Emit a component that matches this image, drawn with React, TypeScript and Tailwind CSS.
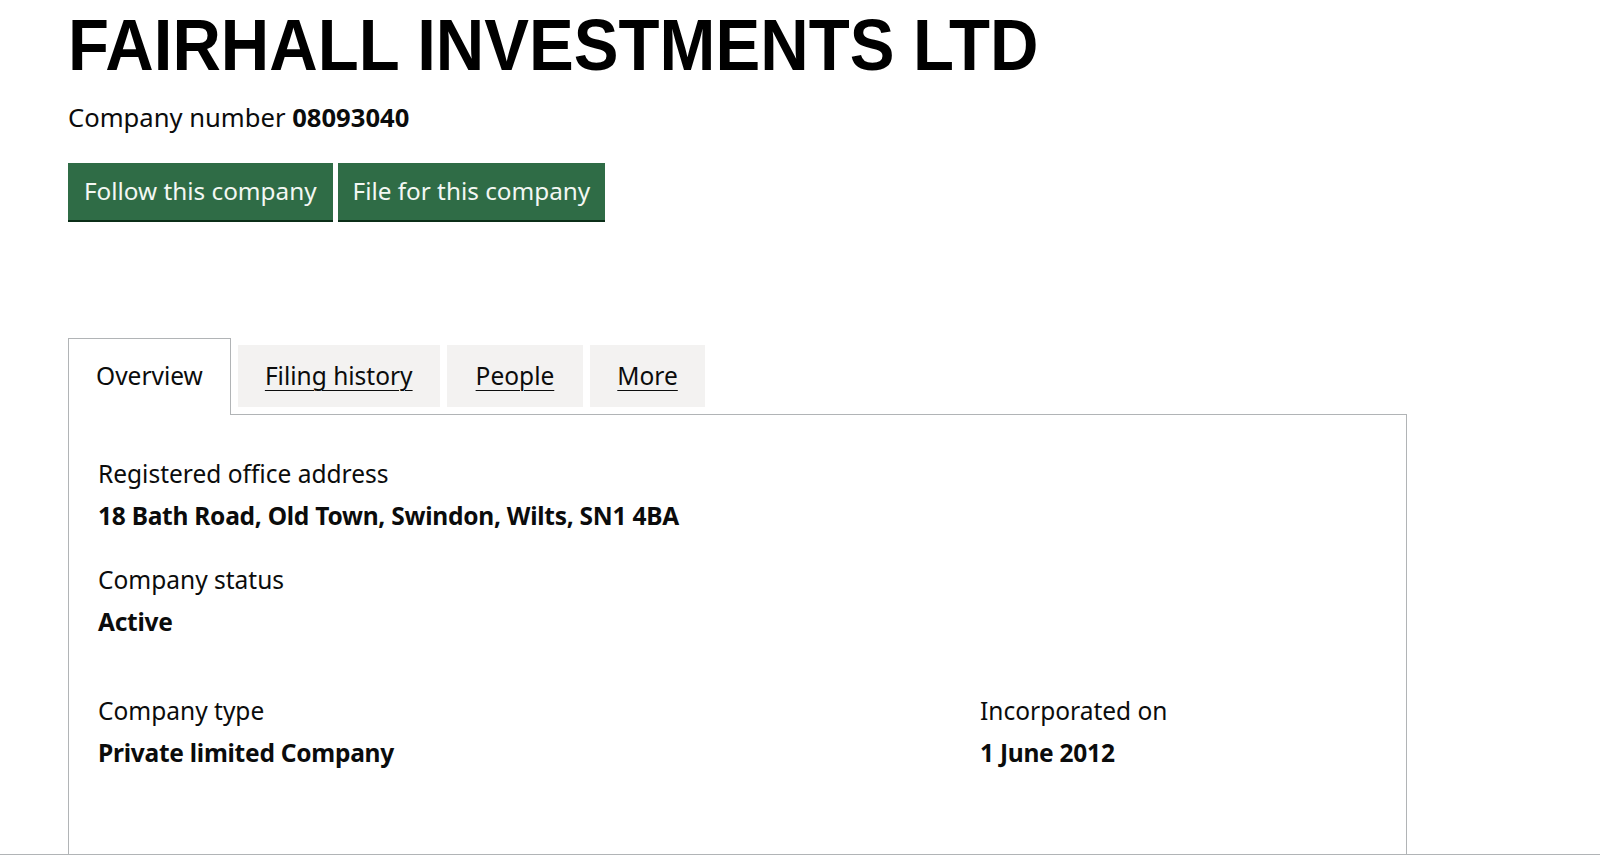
import React from 'react';

const tabs = [
  { label: 'Filing history', pad: 'px-[27px]' },
  { label: 'People', pad: 'px-[29px]' },
  { label: 'More', pad: 'px-[27px]' },
];

const Field = ({ label, value }: { label: string; value: string }) => (
  <div>
    <p className="leading-[30px]">{label}</p>
    <p className="mt-[12px] font-bold leading-[30px] tracking-[-0.25px]">{value}</p>
  </div>
);

const App = () => {
  return (
    <div className="h-[855px] overflow-hidden flex flex-col bg-white border-b border-[#b1b4b6] font-['Noto_Sans',sans-serif] text-[#0b0c0c]">
      <div className="flex flex-1 flex-col pl-[68px] pr-[193px]">
        {/* Heading */}
        <h1 className="mt-[9px] origin-left scale-x-[0.932] whitespace-nowrap font-['Liberation_Sans',Arial,sans-serif] text-[72px] font-bold leading-none text-black">
          FAIRHALL INVESTMENTS LTD
        </h1>
        <p className="mt-[22px] text-[25.6px] leading-[30px]">
          Company number <span className="font-bold">08093040</span>
        </p>

        {/* Actions */}
        <div className="mt-[30px] flex gap-[5px]">
          <button className="h-[57px] bg-[#2f6c46] px-[16px] text-[24.3px] text-[#f3f7f3] shadow-[0_2px_0_#0b2e18]">
            Follow this company
          </button>
          <button className="h-[57px] bg-[#2f6c46] px-[15px] text-[24.3px] text-[#f3f7f3] shadow-[0_2px_0_#0b2e18]">
            File for this company
          </button>
        </div>

        {/* Tabs */}
        <div className="mt-[118px] flex items-start gap-[7px] text-[24.5px]">
          <div className="relative z-10 -mb-px h-[77px] border border-b-0 border-[#b1b4b6] bg-white px-[27px] pt-[22px] leading-[30px]">
            Overview
          </div>
          {tabs.map((t) => (
            <a
              key={t.label}
              href="#"
              className={`mt-[7px] flex h-[62px] items-center bg-[#f3f2f1] ${t.pad} leading-[30px] underline decoration-1 underline-offset-[5px]`}
            >
              {t.label}
            </a>
          ))}
        </div>

        {/* Panel */}
        <div className="flex-1 border border-b-0 border-[#b1b4b6] px-[29px] pt-[44px] text-[24.5px]">
          <Field label="Registered office address" value="18 Bath Road, Old Town, Swindon, Wilts, SN1 4BA" />
          <div className="mt-[34px]">
            <Field label="Company status" value="Active" />
          </div>
          <div className="mt-[59px] grid grid-cols-[882px_1fr]">
            <Field label="Company type" value="Private limited Company" />
            <Field label="Incorporated on" value="1 June 2012" />
          </div>
        </div>
      </div>
    </div>
  );
};

export default App;
